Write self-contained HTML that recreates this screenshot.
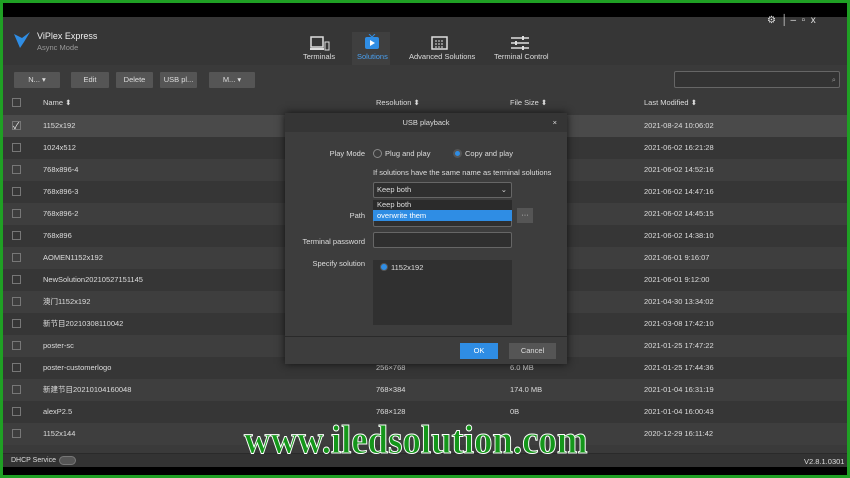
<!DOCTYPE html><html><head><style>
*{margin:0;padding:0;box-sizing:border-box}
body{width:850px;height:478px;background:#1fa024;position:relative;overflow:hidden;font-family:"Liberation Sans","Noto Sans CJK SC",sans-serif;font-size:7.5px;color:#ddd}
.a{position:absolute}
#blk{left:3px;top:3px;width:844px;height:472px;background:#000}
#app{left:3px;top:17px;width:844px;height:450px;background:#3a3a3a}
.btn{position:absolute;top:72px;height:16px;background:#555;color:#ddd;text-align:center;line-height:16px;border-radius:1px}
.row{position:absolute;left:3px;width:844px;height:22px;line-height:22px}
.row span{position:absolute}
.cb{position:absolute;left:9px;top:6px;width:9px;height:9px;border:1px solid #777}
.dlg{left:285px;top:113px;width:282px;height:251px;background:#3d3d3d;box-shadow:0 0 8px #111}
.lbl{position:absolute;text-align:right;width:80px}
.inp{position:absolute;background:#2f2f2f;border:1px solid #666;border-radius:2px}
</style></head><body>
<div class="a" id="blk"></div>
<div class="a" id="app"></div>
<div class="a" style="left:3px;top:17px;width:844px;height:48px;background:#363636"></div>
<svg class="a" style="left:14px;top:32px" width="20" height="16"><path d="M0 2 L8 6 L16 0 L10 10 L6 16 Z" fill="#2f8de4"/></svg>
<div class="a" style="left:37px;top:31px;font-size:9px;color:#eee">ViPlex Express</div>
<div class="a" style="left:37px;top:43px;color:#999">Async Mode</div>
<div class="a" style="left:767px;top:15px;color:#ddd;font-size:10px">⚙ &nbsp;│ ‒ &nbsp;▫ &nbsp;x</div>
<div class="a" style="left:352px;top:32px;width:38px;height:33px;background:#3f3f3f"></div>
<svg class="a" style="left:310px;top:36px" width="20" height="15"><rect x="1" y="1" width="12" height="10" fill="none" stroke="#ddd" stroke-width="1.5"/><rect x="0" y="12" width="14" height="2" fill="#ddd"/><rect x="15" y="6" width="4" height="8" fill="none" stroke="#ddd"/></svg>
<svg class="a" style="left:364px;top:34px" width="16" height="16"><rect x="1" y="3" width="14" height="12" rx="2" fill="#2f8de4"/><path d="M6 6 L11 9 L6 12Z" fill="#fff"/><path d="M5 0 L8 3 L11 0" stroke="#2f8de4" fill="none"/></svg>
<svg class="a" style="left:431px;top:35px" width="17" height="15"><rect x="1" y="2" width="15" height="12" fill="none" stroke="#ddd" stroke-width="1.5"/><path d="M4 6h9M4 9h9M4 12h9" stroke="#ddd" stroke-dasharray="2 1"/></svg>
<svg class="a" style="left:511px;top:36px" width="18" height="14"><path d="M0 2h18M0 7h18M0 12h18" stroke="#ddd" stroke-width="1.5"/><rect x="11" y="0" width="2" height="4" fill="#ddd"/><rect x="4" y="5" width="2" height="4" fill="#ddd"/><rect x="11" y="10" width="2" height="4" fill="#ddd"/></svg>
<div class="a" style="left:303px;top:52px;color:#ddd">Terminals</div>
<div class="a" style="left:357px;top:52px;color:#4aa0f0">Solutions</div>
<div class="a" style="left:409px;top:52px">Advanced Solutions</div>
<div class="a" style="left:494px;top:52px">Terminal Control</div>
<div class="btn" style="left:14px;width:46px">N... ▾</div>
<div class="btn" style="left:71px;width:38px">Edit</div>
<div class="btn" style="left:116px;width:37px">Delete</div>
<div class="btn" style="left:160px;width:37px">USB pl...</div>
<div class="btn" style="left:209px;width:46px">M... ▾</div>
<div class="a" style="left:674px;top:71px;width:166px;height:17px;border:1px solid #666;background:#333;border-radius:2px;color:#999;text-align:right;padding-right:3px;line-height:15px">⌕</div>
<div class="row" style="top:92px;background:#3a3a3a"><div class="cb"></div><span style="left:40px">Name ⬍</span><span style="left:373px">Resolution ⬍</span><span style="left:507px">File Size ⬍</span><span style="left:641px">Last Modified ⬍</span></div>
<div class="row" style="top:115px;background:#4a4a4a"><div class="cb" style="color:#eee;line-height:8px;font-size:9px">✓</div><span style="left:40px">1152x192</span><span style="left:641px">2021-08-24 10:06:02</span></div>
<div class="row" style="top:137px;background:#363636"><div class="cb"></div><span style="left:40px">1024x512</span><span style="left:641px">2021-06-02 16:21:28</span></div>
<div class="row" style="top:159px;background:#3e3e3e"><div class="cb"></div><span style="left:40px">768x896-4</span><span style="left:641px">2021-06-02 14:52:16</span></div>
<div class="row" style="top:181px;background:#363636"><div class="cb"></div><span style="left:40px">768x896-3</span><span style="left:641px">2021-06-02 14:47:16</span></div>
<div class="row" style="top:203px;background:#3e3e3e"><div class="cb"></div><span style="left:40px">768x896-2</span><span style="left:641px">2021-06-02 14:45:15</span></div>
<div class="row" style="top:225px;background:#363636"><div class="cb"></div><span style="left:40px">768x896</span><span style="left:641px">2021-06-02 14:38:10</span></div>
<div class="row" style="top:247px;background:#3e3e3e"><div class="cb"></div><span style="left:40px">AOMEN1152x192</span><span style="left:641px">2021-06-01 9:16:07</span></div>
<div class="row" style="top:269px;background:#363636"><div class="cb"></div><span style="left:40px">NewSolution20210527151145</span><span style="left:641px">2021-06-01 9:12:00</span></div>
<div class="row" style="top:291px;background:#3e3e3e"><div class="cb"></div><span style="left:40px">澳门1152x192</span><span style="left:641px">2021-04-30 13:34:02</span></div>
<div class="row" style="top:313px;background:#363636"><div class="cb"></div><span style="left:40px">新节目20210308110042</span><span style="left:641px">2021-03-08 17:42:10</span></div>
<div class="row" style="top:335px;background:#3e3e3e"><div class="cb"></div><span style="left:40px">poster-sc</span><span style="left:641px">2021-01-25 17:47:22</span></div>
<div class="row" style="top:357px;background:#363636"><div class="cb"></div><span style="left:40px">poster-customerlogo</span><span style="left:373px">256×768</span><span style="left:507px">6.0 MB</span><span style="left:641px">2021-01-25 17:44:36</span></div>
<div class="row" style="top:379px;background:#3e3e3e"><div class="cb"></div><span style="left:40px">新建节目20210104160048</span><span style="left:373px">768×384</span><span style="left:507px">174.0 MB</span><span style="left:641px">2021-01-04 16:31:19</span></div>
<div class="row" style="top:401px;background:#363636"><div class="cb"></div><span style="left:40px">alexP2.5</span><span style="left:373px">768×128</span><span style="left:507px">0B</span><span style="left:641px">2021-01-04 16:00:43</span></div>
<div class="row" style="top:423px;background:#3e3e3e"><div class="cb"></div><span style="left:40px">1152x144</span><span style="left:641px">2020-12-29 16:11:42</span></div>
<div class="a" style="left:3px;top:453px;width:844px;height:14px;background:#333;border-top:1px solid #2a2a2a"></div>
<div class="a" style="left:11px;top:457px;font-size:7px">DHCP Service</div>
<div class="a" style="left:59px;top:456px;width:17px;height:9px;border-radius:5px;background:#555;border:1px solid #777"></div>
<div class="a" style="left:804px;top:457px">V2.8.1.0301</div>
<div class="a dlg">
<div class="a" style="left:0;top:0;width:282px;height:19px;background:#353535;text-align:center;line-height:19px">USB playback<span style="position:absolute;right:10px">×</span></div>
<div class="lbl" style="left:0;top:36px">Play Mode</div>
<div class="a" style="left:88px;top:36px;width:9px;height:9px;border-radius:50%;border:1px solid #888"></div>
<div class="a" style="left:100px;top:36px">Plug and play</div>
<div class="a" style="left:168px;top:36px;width:9px;height:9px;border-radius:50%;background:#2f8de4;border:2px solid #555"></div>
<div class="a" style="left:180px;top:36px">Copy and play</div>
<div class="a" style="left:88px;top:55px">If solutions have the same name as terminal solutions</div>
<div class="inp" style="left:88px;top:69px;width:139px;height:16px;padding-left:3px;line-height:14px">Keep both<span style="position:absolute;right:4px">⌄</span></div>
<div class="lbl" style="left:0;top:98px">Path</div>
<div class="inp" style="left:88px;top:92px;width:139px;height:22px"></div>
<div class="a" style="left:88px;top:87px;width:139px;height:10px;background:#2b2b2b;padding-left:4px;line-height:10px">Keep both</div>
<div class="a" style="left:88px;top:97px;width:139px;height:11px;background:#2f8de4;color:#fff;padding-left:4px;line-height:11px">overwrite them</div>
<div class="a" style="left:232px;top:95px;width:16px;height:15px;background:#555;text-align:center;line-height:13px">···</div>
<div class="lbl" style="left:0;top:124px">Terminal password</div>
<div class="inp" style="left:88px;top:119px;width:139px;height:16px"></div>
<div class="lbl" style="left:0;top:146px">Specify solution</div>
<div class="a" style="left:88px;top:147px;width:139px;height:65px;background:#303030"></div>
<div class="a" style="left:95px;top:150px;width:8px;height:8px;border-radius:50%;background:#2f8de4;border:1.5px solid #555"></div>
<div class="a" style="left:106px;top:150px">1152x192</div>
<div class="a" style="left:0;top:223px;width:282px;height:1px;background:#2a2a2a"></div>
<div class="a" style="left:175px;top:230px;width:38px;height:16px;background:#2f8de4;color:#fff;text-align:center;line-height:16px">OK</div>
<div class="a" style="left:224px;top:230px;width:47px;height:16px;background:#555;text-align:center;line-height:16px">Cancel</div>
</div>
<div class="a" style="left:244px;top:416px;width:364px;font-family:'Liberation Serif',serif;font-weight:bold;font-size:40px;color:#14961a;-webkit-text-stroke:1px #fff;white-space:nowrap;transform:scaleX(0.92);transform-origin:left top">www.iledsolution.com</div>
</body></html>
